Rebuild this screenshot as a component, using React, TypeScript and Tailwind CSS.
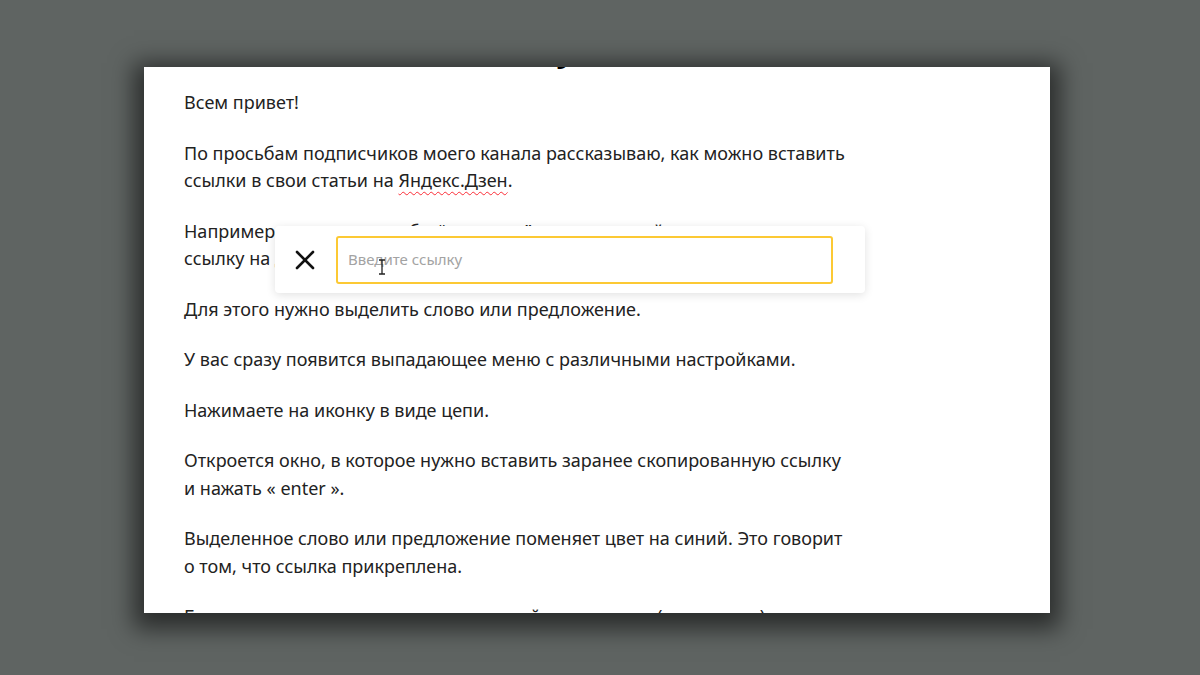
const paragraphs: React.ReactNode[] = [
  "Всем привет!",
  <>
    По просьбам подписчиков моего канала рассказываю, как можно вставить
    ссылки в свои статьи на{" "}
    <span className="underline decoration-wavy decoration-red-500 decoration-1 underline-offset-4">
      Яндекс.Дзен
    </span>
    .
  </>,
  <>
    Например, вы хотите, чтобы “активное” слово в вашей статье вело
    <br />
    ссылку на другой материал или сайт.
  </>,
  "Для этого нужно выделить слово или предложение.",
  "У вас сразу появится выпадающее меню с различными настройками.",
  "Нажимаете на иконку в виде цепи.",
  "Откроется окно, в которое нужно вставить заранее скопированную ссылку и нажать « enter ».",
  "Выделенное слово или предложение поменяет цвет на синий. Это говорит о том, что ссылка прикреплена.",
  "Благодаря этому читатель сможет перейти по ссылке (или статью) и прочитать материал.",
];

const App = () => {
  return (
    <div className="w-[1200px] h-[675px] bg-[#5f6462] pt-[67px] pl-[144px] overflow-hidden">
      <div className="relative w-[906px] h-[546px] bg-white overflow-hidden shadow-[0_6px_22px_10px_rgba(0,0,0,0.55)]">
        <div className="pl-10 w-[705px] text-[18px] leading-[27.5px] text-[#222] font-['Noto_Sans',sans-serif]">
          <h1 className="-mt-[38px] h-[40px] mb-[20px] text-[32px] leading-[40px] font-bold text-black pl-[40px]">
            Как добавить ссылку
          </h1>
          {paragraphs.map((p, i) => (
            <p key={i} className="mb-[23px]">
              {p}
            </p>
          ))}
        </div>

        <div className="absolute left-[131px] top-[159px] w-[590px] h-[67px] bg-white rounded shadow-[0_2px_10px_rgba(0,0,0,0.12)] flex items-center pl-5 pr-8 gap-[21px]">
          <svg width="20" height="20" viewBox="0 0 20 20" className="shrink-0">
            <path d="M2 2 L18 18 M18 2 L2 18" stroke="#111" strokeWidth="2.6" strokeLinecap="round" />
          </svg>
          <div className="relative flex-1 h-[48px] border-2 border-[#fcc934] rounded-[3px] flex items-center px-[10px]">
            <input
              placeholder="Введите ссылку"
              className="w-full outline-none text-[15px] text-[#222] placeholder:text-[#a3a3a3] font-['Noto_Sans',sans-serif]"
            />
            <svg width="8" height="16" viewBox="0 0 8 16" className="absolute left-[40px] top-[21px]">
              <path d="M1 1 H7 M4 1 V15 M1 15 H7" stroke="#222" strokeWidth="1.3" fill="none" />
            </svg>
          </div>
        </div>
      </div>
    </div>
  );
};

export default App;
